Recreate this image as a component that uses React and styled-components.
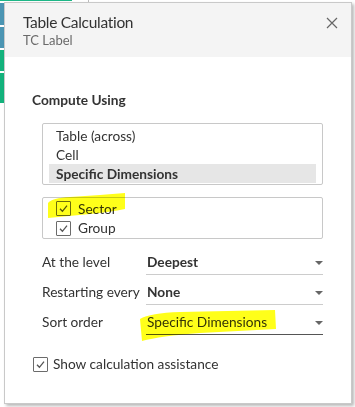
import styled, { createGlobalStyle } from "styled-components";

const GlobalStyle = createGlobalStyle`
  html, body {
    margin: 0;
    padding: 0;
    background: #ffffff;
  }
  body {
    font-family: Lato, "Open Sans", sans-serif;
    color: #333333;
    -webkit-font-smoothing: antialiased;
  }
`;

const Page = styled.div`
  width: 355px;
  height: 407px;
  overflow: hidden;
  display: flex;
  flex-direction: column;
`;

const TopStrip = styled.div`
  height: 2px;
  display: flex;
  align-items: flex-start;
`;

const GreenLine = styled.div`
  width: 72px;
  height: 1px;
  background: #1db787;
`;

const Separator = styled.div`
  width: 1px;
  height: 2px;
  margin-left: 16px;
  background: #bdbdbd;
`;

const Workspace = styled.div`
  display: flex;
  align-items: flex-start;
`;

const Rail = styled.div`
  width: 4px;
  display: flex;
  flex-direction: column;
  gap: 2px;
  padding-top: 1px;
`;

const RailBar = styled.div`
  height: ${(p) => p.h}px;
  background: ${(p) => p.color};
`;

const Dialog = styled.section`
  position: relative;
  box-sizing: border-box;
  width: 348px;
  height: 402px;
  border: 1px solid #c9c9c9;
  background: #ffffff;
  box-shadow: 2px 2px 3px rgba(0, 0, 0, 0.28);
  display: flex;
  flex-direction: column;
`;

const Header = styled.header`
  box-sizing: border-box;
  height: 54px;
  background: #f4f4f4;
  padding: 9px 13px 0 18px;
  display: flex;
  justify-content: space-between;
  align-items: flex-start;
`;

const Title = styled.h2`
  margin: 0;
  font-size: 15.5px;
  letter-spacing: -0.3px;
  line-height: 20px;
  font-weight: 400;
  color: #333333;
`;

const Subtitle = styled.div`
  margin-top: 0;
  font-size: 13px;
  line-height: 16px;
  color: #6a6a6a;
`;

const CloseButton = styled.button`
  border: 0;
  background: none;
  padding: 0;
  margin-top: 4px;
  width: 13px;
  height: 13px;
  display: grid;
  place-items: center;
  cursor: pointer;
`;

const Body = styled.div`
  padding: 35px 28px 0 27px;
  display: flex;
  flex-direction: column;
  font-size: 13.7px;
  line-height: 16px;
`;

const SectionTitle = styled.div`
  font-weight: 700;
  color: #333333;
`;

const ListBox = styled.div`
  box-sizing: border-box;
  margin: ${(p) => p.mt}px 0 0 10px;
  height: ${(p) => p.h}px;
  border: 1px solid #c8c8c8;
  border-radius: 2px;
  padding-top: ${(p) => p.pt}px;
  display: flex;
  flex-direction: column;
`;

const ListRow = styled.div`
  height: 19px;
  line-height: 19px;
  margin: 0 6px;
  padding-left: 7px;
  font-weight: ${(p) => (p.selected ? 700 : 400)};
  background: ${(p) => (p.selected ? "#e6e6e6" : "transparent")};
`;

const CheckRow = styled.label`
  height: 20px;
  padding-left: 13px;
  display: flex;
  align-items: center;
  gap: 7px;
`;

const Box = styled.span`
  box-sizing: border-box;
  width: 15px;
  height: 15px;
  border: 1px solid #6b6b6b;
  border-radius: 1px;
  background: #ffffff;
  display: grid;
  place-items: center;
  flex: none;
`;

const FieldRow = styled.div`
  margin: ${(p) => p.mt}px 0 0 10px;
  display: grid;
  grid-template-columns: 104px 177px;
  align-items: start;
`;

const FieldLabel = styled.div`
  color: #333333;
  white-space: nowrap;
`;

const Select = styled.div`
  box-sizing: border-box;
  padding: 0 0 4px 1px;
  border-bottom: 1px solid ${(p) => (p.focused ? "#555555" : "#cccccc")};
  display: flex;
  justify-content: space-between;
  align-items: flex-start;
  font-weight: ${(p) => (p.bold ? 700 : 400)};
`;

const Caret = styled.span`
  margin-top: 7px;
  width: 0;
  height: 0;
  border-left: 4px solid transparent;
  border-right: 4px solid transparent;
  border-top: 4px solid #666666;
`;

const AssistRow = styled.label`
  margin-top: 21px;
  display: flex;
  align-items: center;
  gap: 5px;
  margin-left: 1px;
`;

const Highlights = styled.svg`
  position: absolute;
  left: -5px;
  top: -3px;
  width: 355px;
  height: 407px;
  pointer-events: none;
  mix-blend-mode: multiply;
`;

function Check() {
  return (
    <svg width="11" height="11" viewBox="0 0 11 11">
      <path d="M2 5.8 L4.4 8.3 L9 2.6" fill="none" stroke="#555" strokeWidth="1.3" />
    </svg>
  );
}

function Field({ label, value, bold, focused, mt }) {
  return (
    <FieldRow mt={mt}>
      <FieldLabel>{label}</FieldLabel>
      <Select bold={bold} focused={focused}>
        <span>{value}</span>
        <Caret />
      </Select>
    </FieldRow>
  );
}

export default function App() {
  return (
    <Page>
      <GlobalStyle />
      <TopStrip>
        <GreenLine />
        <Separator />
      </TopStrip>
      <Workspace>
        <Rail>
          <RailBar h={22} color="#4b95b3" />
          <RailBar h={21} color="#4b95b3" />
          <RailBar h={21} color="#13b27c" />
          <RailBar h={30} color="#13b27c" />
        </Rail>
        <Dialog>
          <Header>
            <div>
              <Title>Table Calculation</Title>
              <Subtitle>TC Label</Subtitle>
            </div>
            <CloseButton aria-label="Close">
              <svg width="12" height="12" viewBox="0 0 12 12">
                <path d="M1 1 L11 11 M11 1 L1 11" stroke="#666" strokeWidth="1.2" />
              </svg>
            </CloseButton>
          </Header>
          <Body>
            <SectionTitle>Compute Using</SectionTitle>
            <ListBox mt={15} h={62} pt={2}>
              <ListRow>Table (across)</ListRow>
              <ListRow>Cell</ListRow>
              <ListRow selected>Specific Dimensions</ListRow>
            </ListBox>
            <ListBox mt={12} h={42} pt={1}>
              <CheckRow>
                <Box><Check /></Box>
                Sector
              </CheckRow>
              <CheckRow>
                <Box><Check /></Box>
                Group
              </CheckRow>
            </ListBox>
            <Field mt={15} label="At the level" value="Deepest" bold />
            <Field mt={9} label="Restarting every" value="None" bold />
            <Field mt={9} label="Sort order" value="Specific Dimensions" focused />
            <AssistRow>
              <Box><Check /></Box>
              Show calculation assistance
            </AssistRow>
          </Body>
          <Highlights viewBox="0 0 355 407">
            <path
              d="M48,203 Q52,198 70,197 L100,195 L125,193 L125,209 Q110,212 90,214 L48,218 Z"
              fill="#ffff1a"
            />
            <path
              d="M140,319 Q150,313 180,312 L275,310 L276,329 L200,333 Q160,336 142,341 Z"
              fill="#ffff1a"
            />
          </Highlights>
        </Dialog>
      </Workspace>
    </Page>
  );
}
